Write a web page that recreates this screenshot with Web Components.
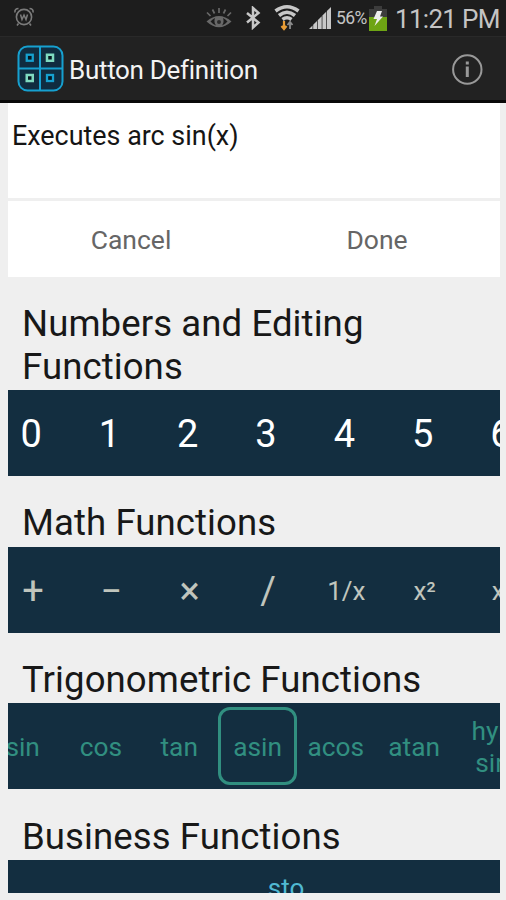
<!DOCTYPE html>
<html lang="en">
<head>
<meta charset="utf-8">
<title>Button Definition</title>
<style>
  html, body { height: 100%; }
  body { margin: 0; overflow: hidden; background: #efefef; font-family: Roboto, "Liberation Sans", sans-serif; }
</style>
</head>
<body>
<button-definition-app></button-definition-app>

<script>
class StatusBar extends HTMLElement {
  constructor() {
    super();
    this.attachShadow({ mode: "open" });
    this.shadowRoot.innerHTML = `
      <style>
        :host { display: flex; align-items: center; height: 36px; box-sizing: border-box; background: #1d1d1d; color: #c4c4c4; }
        svg { display: block; flex: none; }
        .alarm { margin: 0 0 3px 13px; }
        .eye { margin-left: auto; }
        .battery-level { width: 31px; font-size: 17.5px; letter-spacing: -0.6px; margin-left: 4px; }
        .time { width: 105px; margin: 2px 6px 0 8px; font-size: 26px; line-height: 36px; letter-spacing: -0.7px; white-space: nowrap; }
      </style>
      <svg class="alarm" width="22" height="22" viewBox="0 0 22 22" fill="none" stroke="#7b7b7b" stroke-width="1.6">
        <circle cx="11" cy="11" r="7.6"/>
        <path d="M2 6.5C1.5 4 3 2.5 5.5 2.5M20 6.5C20.500 4 19 2.500 16.500 2.500M5.500 17.500L4 19.500M16.500 17.500L18 19.500"/>
        <path d="M7.500 8.500L9 13.500L11 9L13 13.500L14.500 8.500" stroke-width="1.500"/>
      </svg>
      <svg class="eye" width="26" height="24" viewBox="0 0 26 24" fill="none" stroke="#686868">
        <path d="M0.500 15.500Q13 4.500 25.500 15.500Q13 27 0.500 15.500Z" fill="#686868" stroke="none"/>
        <path d="M4.500 15.500Q6.500 13 9 12Q7.500 16 10 19.500Q7 18.500 4.500 15.500ZM21.500 15.500Q19.500 13 17 12Q18.500 16 16 19.500Q19 18.500 21.500 15.500Z" fill="#1d1d1d" stroke="none"/>
        <circle cx="13" cy="16" r="2" fill="#2b2b2b" stroke="none"/>
        <path d="M13 2V7M6.500 3.500L8.500 7.500M19.500 3.500L17.500 7.500M1 6.500L4.500 10M25 6.500L21.500 10" stroke-width="1.700"/>
      </svg>
      <svg width="16" height="24" viewBox="0 0 16 24" style="margin-left:13px" fill="none" stroke="#c7c7c7" stroke-width="2.500">
        <path d="M2 7L13.500 16.500L8 21.500V2L13.500 7L2 16.500"/>
      </svg>
      <svg width="26" height="28" viewBox="0 0 26 28" style="margin-left:13px" fill="none" stroke="#c7c7c7" stroke-width="3.600">
        <path d="M1.500 7Q13 -1.500 24.500 7M5 11.500Q13 5 21 11.500M8.500 15.500Q13 12 17.500 15.500"/>
        <path d="M10 17V24M7.500 22L10 25L12.500 22" stroke="#e89c35" stroke-width="2.200"/>
        <path d="M16 25V19M13.500 21L16 18L18.500 21" stroke="#8c8c8c" stroke-width="1.800"/>
      </svg>
      <svg width="24" height="24" viewBox="0 0 24 24" style="margin-left:8px" fill="#c7c7c7">
        <path d="M1 23L4.500 19.500V23ZM5.200 18.800L9 15V23H5.200ZM9.700 14.300L13.700 10.300V23H9.700ZM14.400 9.600L18.200 5.800V23H14.400ZM18.900 5.100L23 1V23H18.900Z"/>
      </svg>
      <span class="battery-level">56%</span>
      <svg width="18" height="26" viewBox="0 0 18 26" style="margin:2px 0 0 2px">
        <path d="M5 0H13V3H18V11H0V3H5Z" fill="#3c3c3c"/>
        <path d="M0 11H18V25H0Z" fill="#6ea414"/>
        <path d="M8 5H13L11 10.500H14L5.500 20L8 13H4.500Z" fill="#eeeeee"/>
      </svg>
      <span class="time">11:21 PM</span>
    `;
  }
}
customElements.define("status-bar", StatusBar);

class ActionBar extends HTMLElement {
  constructor() {
    super();
    this.attachShadow({ mode: "open" });
    this.shadowRoot.innerHTML = `
      <style>
        :host { display: flex; align-items: center; height: 67px; box-sizing: border-box; padding: 0 23px 0 17px; background: #222; color: #f3f3f3; border-top: 1px solid #292929; border-bottom: 3px solid #090909; }
        svg { display: block; flex: none; }
        .title { flex: 1; margin-left: 5px; font-size: 26px; line-height: 36px; letter-spacing: -0.3px; white-space: nowrap; padding-top: 3px; }
      </style>
      <svg width="47" height="47" viewBox="0 0 47 47" fill="none">
        <rect x="1.500" y="1.500" width="44" height="44" rx="9" fill="#102c40" stroke="#16a0cf" stroke-width="2"/>
        <path d="M23 1V46M1 23.500H46" stroke="#16a0cf" stroke-width="2"/>
        <rect x="9.750" y="9.750" width="6" height="6" fill="#07151f" stroke="#16a0cf" stroke-width="2.300"/>
        <rect x="30" y="9.750" width="6" height="6" fill="#07151f" stroke="#7fdac0" stroke-width="2.500"/>
        <rect x="9.750" y="30" width="6" height="6" fill="#07151f" stroke="#7fdac0" stroke-width="2.500"/>
        <rect x="30" y="30" width="6" height="6" fill="#07151f" stroke="#16a0cf" stroke-width="2.300"/>
      </svg>
      <span class="title"><slot></slot></span>
      <svg width="32" height="32" viewBox="0 0 32 32" fill="none">
        <circle cx="16.300" cy="16.500" r="14.200" stroke="#999" stroke-width="2"/>
        <path d="M16.300 13.500V24M16.300 8.500V11.500" stroke="#999" stroke-width="3"/>
      </svg>
    `;
  }
}
customElements.define("action-bar", ActionBar);

class DefinitionPanel extends HTMLElement {
  constructor() {
    super();
    this.attachShadow({ mode: "open" });
    this.shadowRoot.innerHTML = `
      <style>
        :host { display: flex; flex-direction: column; gap: 3px; margin: 0 6px 0 8px; }
        .description { height: 95px; box-sizing: border-box; padding: 15px 4px; background: #fff; color: #151515; font-size: 26.9px; line-height: 36px; }
        .actions { display: grid; grid-template-columns: 1fr 1fr; height: 76px; align-items: center; background: #fff; color: #666; text-align: center; font-size: 26.5px; line-height: 36px; padding-top: 2px; box-sizing: border-box; }
      </style>
      <div class="description"><slot></slot></div>
      <div class="actions"><span>Cancel</span><span>Done</span></div>
    `;
  }
}
customElements.define("definition-panel", DefinitionPanel);

class FunctionKey extends HTMLElement {
  constructor() {
    super();
    this.attachShadow({ mode: "open" });
    this.shadowRoot.innerHTML = `
      <style>
        :host { display: flex; flex: none; align-items: center; justify-content: center; width: 78.3px; height: 78px; box-sizing: border-box; padding-top: 2px; text-align: center; }
        :host([selected]) { border: 3px solid #318f80; border-radius: 12px; }
      </style>
      <span><slot></slot></span>
    `;
  }
}
customElements.define("function-key", FunctionKey);

class FunctionStrip extends HTMLElement {
  constructor() {
    super();
    this.attachShadow({ mode: "open" });
    this.shadowRoot.innerHTML = `
      <style>
        :host { display: block; margin: 0 6px 0 8px; }
        h2 { margin: 0 0 2px; padding: 0 14px; color: #181818; font-size: 36.6px; font-weight: 400; line-height: 42.500px; letter-spacing: 0.08px; }
        .keys { display: flex; align-items: center; height: 86px; overflow: hidden; background: #132e40; color: var(--key-color, #fff); font-size: var(--key-size, 26px); line-height: 32px; }
        .track { display: flex; margin-left: var(--scroll, 0); }
      </style>
      <h2></h2>
      <div class="keys"><div class="track"><slot></slot></div></div>
    `;
    this.shadowRoot.querySelector("h2").textContent = this.getAttribute("heading");
  }
}
customElements.define("function-strip", FunctionStrip);

class ButtonDefinitionApp extends HTMLElement {
  constructor() {
    super();
    this.attachShadow({ mode: "open" });
    this.shadowRoot.innerHTML = `
      <style>
        :host { display: flex; flex-direction: column; height: 900px; overflow: hidden; }
        status-bar, action-bar, definition-panel { flex: none; }
        .list { display: flex; flex-direction: column; gap: 26.2px; height: 616px; padding-top: 26px; box-sizing: border-box; overflow: hidden; }
        function-strip { flex: none; }
        .numbers { --key-size: 38px; --scroll: -16px; }
        .math { --key-color: #c0c5bd; --scroll: -14px; }
        .trig { --key-color: #318f80; --key-size: 26.3px; --scroll: -24.5px; }
        .business { --key-color: #50b9d2; --scroll: 4px; }
        .tall { font-size: 38px; }
      </style>
      <status-bar></status-bar>
      <action-bar>Button Definition</action-bar>
      <definition-panel>Executes arc sin(x)</definition-panel>
      <div class="list">
        <function-strip class="numbers" heading="Numbers and Editing Functions">
          <function-key>0</function-key>
          <function-key>1</function-key>
          <function-key>2</function-key>
          <function-key>3</function-key>
          <function-key>4</function-key>
          <function-key>5</function-key>
          <function-key>6</function-key>
        </function-strip>
        <function-strip class="math" heading="Math Functions">
          <function-key class="tall">+</function-key>
          <function-key class="tall">−</function-key>
          <function-key class="tall">×</function-key>
          <function-key class="tall">/</function-key>
          <function-key>1/x</function-key>
          <function-key>x²</function-key>
          <function-key>x³</function-key>
        </function-strip>
        <function-strip class="trig" heading="Trigonometric Functions">
          <function-key>sin</function-key>
          <function-key>cos</function-key>
          <function-key>tan</function-key>
          <function-key selected>asin</function-key>
          <function-key>acos</function-key>
          <function-key>atan</function-key>
          <function-key>hyp<br>sin</function-key>
        </function-strip>
        <function-strip class="business" heading="Business Functions">
          <function-key></function-key>
          <function-key></function-key>
          <function-key></function-key>
          <function-key>sto<br>&nbsp;</function-key>
        </function-strip>
      </div>
    `;
  }
}
customElements.define("button-definition-app", ButtonDefinitionApp);
</script>
</body>
</html>
